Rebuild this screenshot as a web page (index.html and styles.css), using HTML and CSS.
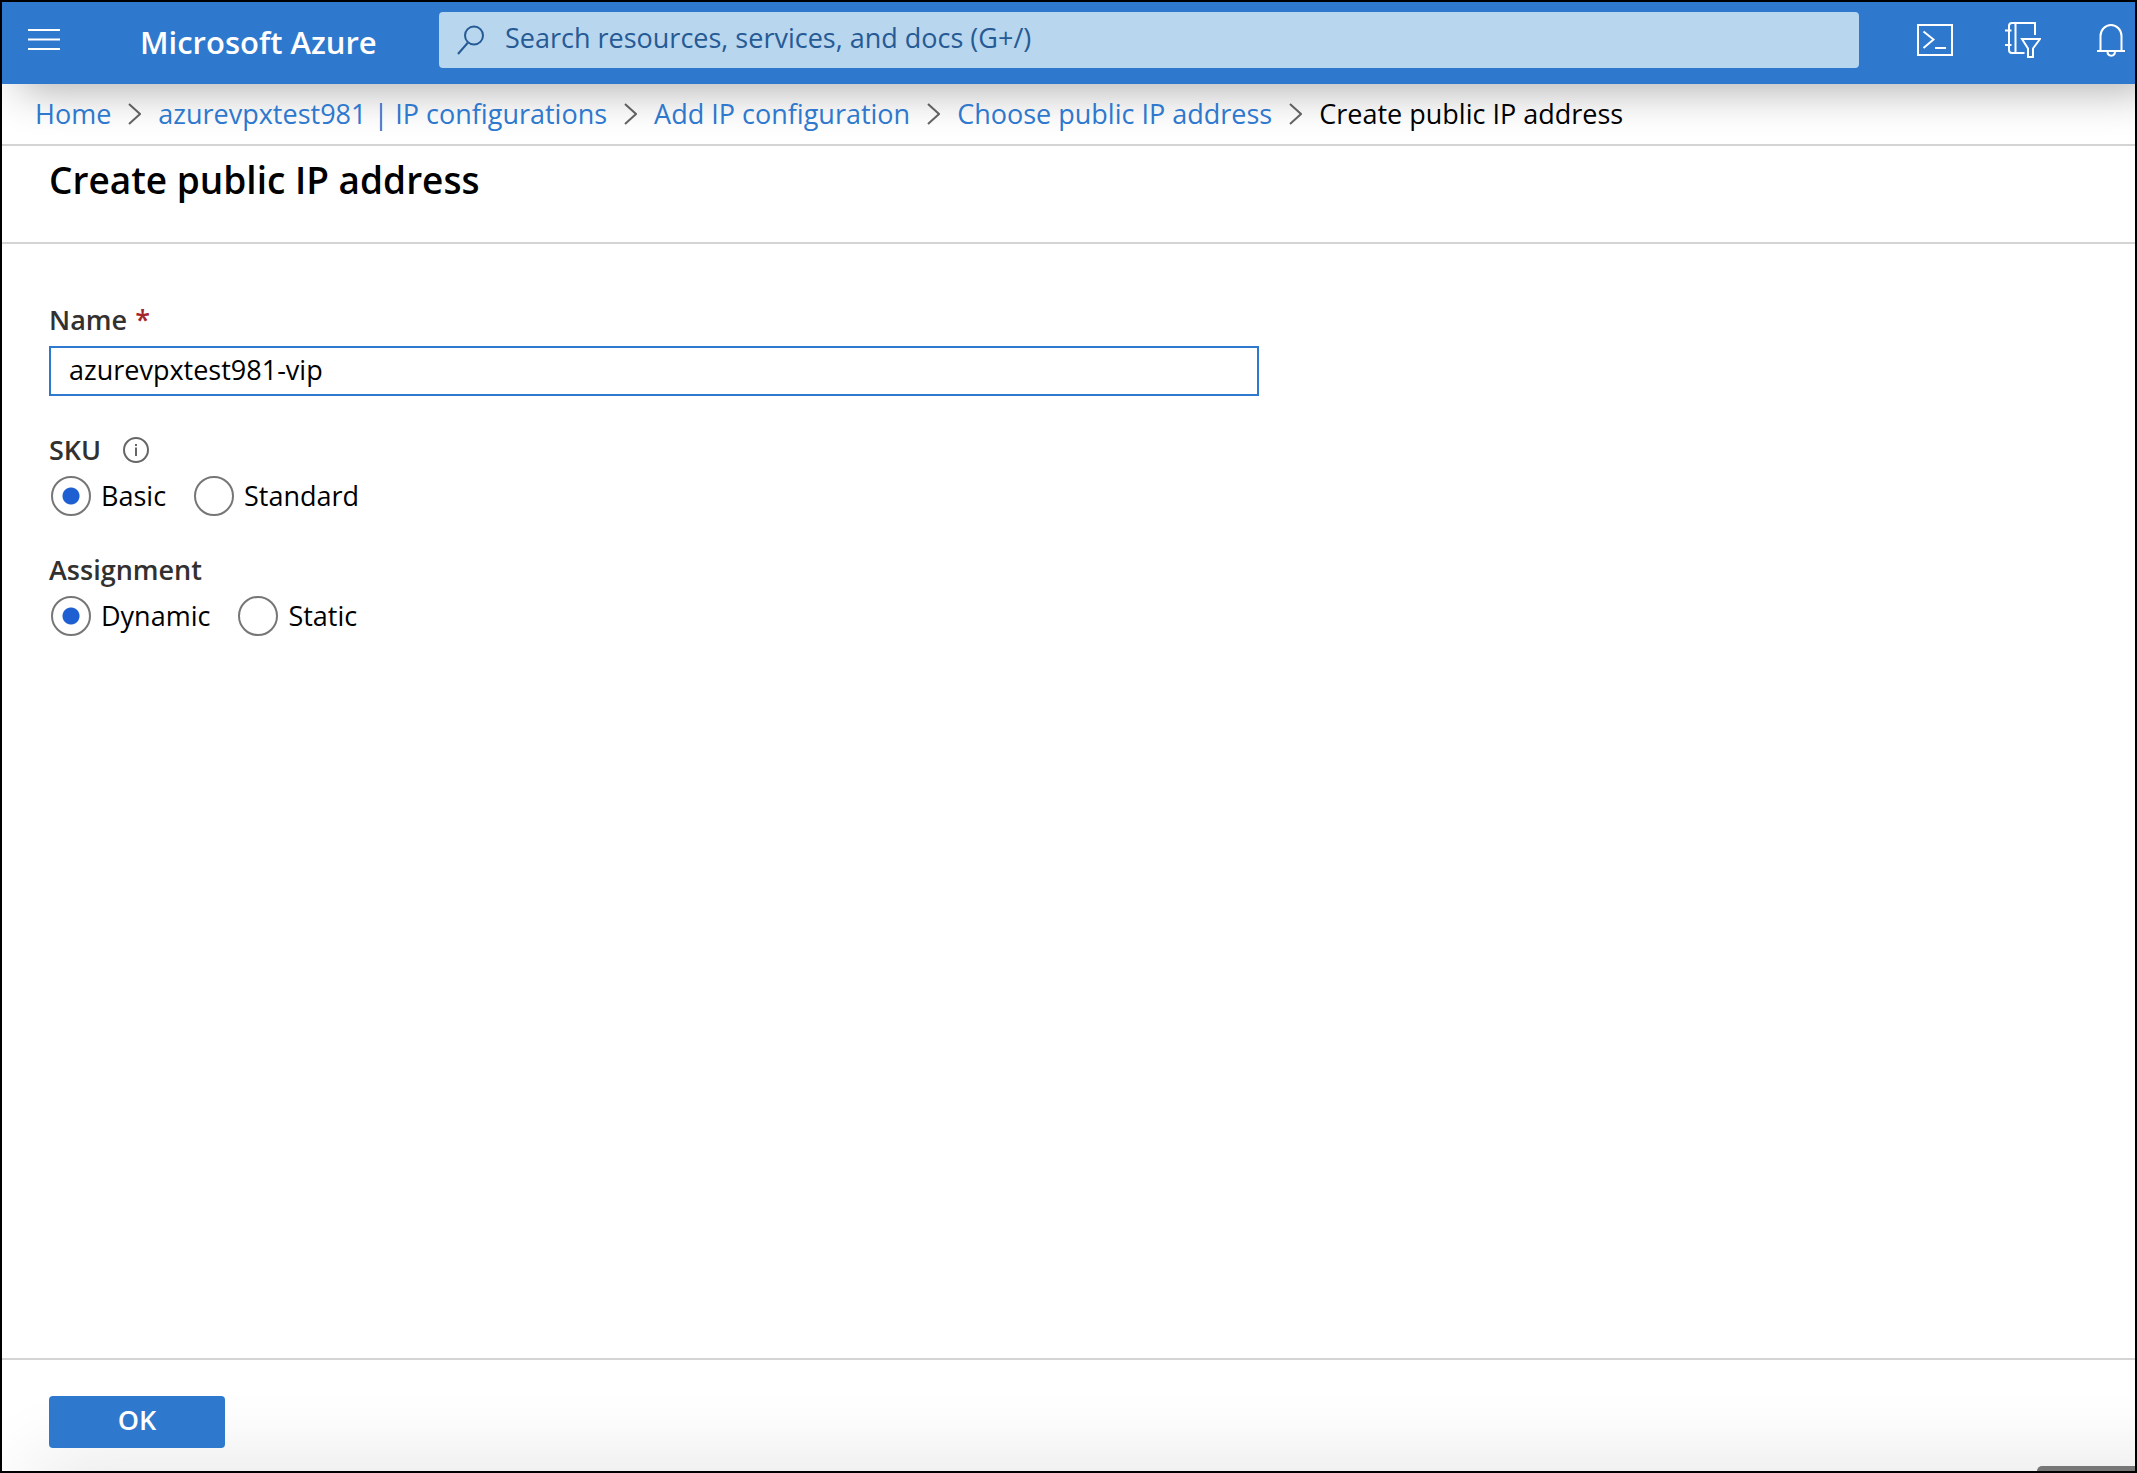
FILE: index.html
```html
<!DOCTYPE html>
<html lang="en">
<head>
<meta charset="utf-8">
<meta name="viewport" content="width=device-width, initial-scale=1">
<title>Create public IP address - Microsoft Azure</title>
<link rel="stylesheet" href="styles.css">
</head>
<body>
<header class="topbar">
  <button class="icon-button menu-button" type="button" aria-label="Show portal menu">
    <svg width="32" height="22" viewBox="0 0 32 22" fill="none" stroke="currentColor" stroke-width="2"><path d="M0 1h32M0 10.500h32M0 20h32"/></svg>
  </button>
  <a class="brand" href="#">Microsoft Azure</a>
  <form class="search" role="search">
    <svg class="search-icon" width="28" height="30" viewBox="0 0 28 30" fill="none" stroke="currentColor" stroke-width="2"><circle cx="17" cy="10.500" r="9"/><path d="M11 17.500L1 29"/></svg>
    <input class="search-input" type="search" aria-label="Search" placeholder="Search resources, services, and docs (G+/)">
  </form>
  <nav class="tools" aria-label="Portal tools">
    <button class="icon-button" type="button" aria-label="Cloud Shell">
      <svg width="36" height="36" viewBox="0 0 36 36" fill="none" stroke="currentColor" stroke-width="2"><path d="M1 3h34v30H1zM6.500 9.500l10 8-10 8.500M18 26h11"/></svg>
    </button>
    <button class="icon-button" type="button" aria-label="Directories and subscriptions">
      <svg width="36" height="36" viewBox="0 0 36 36" fill="none" stroke="currentColor" stroke-width="2"><path d="M30 13V1H7Q4 1 4 4v24q0 3 3 3h12.500M10.500 1v30M0 8.500h6.500M0 23h6.500"/><path d="M17 17h18l-7 9.500V35h-5v-8.500z"/></svg>
    </button>
    <button class="icon-button" type="button" aria-label="Notifications">
      <svg width="32" height="36" viewBox="-4 0 32 36" fill="none" stroke="currentColor" stroke-width="2"><path d="M0 29h28M3.500 29V14a10.500 11 0 0 1 21 0v15M10.500 29.500c0 5.500 7.500 5.500 7.500 0"/></svg>
    </button>
  </nav>
</header>
<nav class="breadcrumb" aria-label="Breadcrumb">
  <a href="#">Home</a>
  <svg class="chevron" width="13" height="22" viewBox="0 0 13 22"><path d="M1 1l11 10L1 21"/></svg>
  <a href="#">azurevpxtest981 | IP configurations</a>
  <svg class="chevron" width="13" height="22" viewBox="0 0 13 22"><path d="M1 1l11 10L1 21"/></svg>
  <a href="#">Add IP configuration</a>
  <svg class="chevron" width="13" height="22" viewBox="0 0 13 22"><path d="M1 1l11 10L1 21"/></svg>
  <a href="#">Choose public IP address</a>
  <svg class="chevron" width="13" height="22" viewBox="0 0 13 22"><path d="M1 1l11 10L1 21"/></svg>
  <span aria-current="page">Create public IP address</span>
</nav>
<div class="blade-header"><h1>Create public IP address</h1></div>
<main class="blade-body">
  <form class="form" id="create-ip">
    <div class="field">
      <label class="label" for="name">Name <span class="required">*</span></label>
      <input class="text-input" id="name" type="text" value="azurevpxtest981-vip" required>
    </div>
    <fieldset class="field">
      <legend class="label">SKU
        <svg class="info" width="26" height="26" viewBox="0 0 26 26" fill="none" stroke="currentColor"><circle cx="13" cy="13" r="12" stroke-width="2"/><path d="M13 10.500v8.500M13 7v2" stroke-width="2"/></svg>
      </legend>
      <div class="options">
        <label class="option"><input type="radio" name="sku" checked>Basic</label>
        <label class="option"><input type="radio" name="sku">Standard</label>
      </div>
    </fieldset>
    <fieldset class="field">
      <legend class="label">Assignment</legend>
      <div class="options">
        <label class="option"><input type="radio" name="assignment" checked>Dynamic</label>
        <label class="option"><input type="radio" name="assignment">Static</label>
      </div>
    </fieldset>
  </form>
</main>
<footer class="blade-footer">
  <button class="primary" type="submit" form="create-ip">OK</button>
</footer>
</body>
</html>
```
FILE: styles.css
```css
* {
  box-sizing: border-box;
}

body {
  display: flex;
  flex-direction: column;
  min-height: 100vh;
  margin: 0;
  overflow-x: hidden;
  border: 2px solid #000;
  background: #fff;
  color: #000;
  font: 27px/36px "Open Sans", "Noto Sans", sans-serif;
}

button,
input {
  font: inherit;
}

a {
  color: #2e78ce;
  text-decoration: none;
}

/* Top bar */
.topbar {
  position: relative;
  display: flex;
  align-items: center;
  height: 82px;
  padding: 0 10px 6px 26px;
  background: #2e78ce;
  color: #fff;
  box-shadow: 18px 6px 44px rgba(0, 0, 0, 0.32);
}

.icon-button {
  display: flex;
  padding: 0;
  border: 0;
  background: none;
  color: inherit;
}

.menu-button {
  width: 112px;
}

.brand {
  width: 299px;
  padding-top: 4px;
  color: #fff;
  font-size: 31px;
  font-weight: 600;
  white-space: nowrap;
}

.search {
  display: flex;
  flex: 1;
  align-items: center;
  gap: 20px;
  height: 56px;
  padding: 0 18px;
  border-radius: 4px;
  background: #b8d6ee;
  color: #265a94;
}

.search-input {
  flex: 1;
  min-width: 0;
  height: 56px;
  padding: 0 0 5px;
  border: 0;
  outline: 0;
  background: none;
  color: inherit;
}

.search-input::placeholder {
  color: inherit;
  opacity: 1;
}

.tools {
  display: flex;
  gap: 52px;
  margin-left: 58px;
}

/* Breadcrumb */
.breadcrumb {
  display: flex;
  align-items: center;
  gap: 17px;
  height: 62px;
  padding: 0 33px;
  border-bottom: 2px solid #d4d4d4;
  white-space: nowrap;
}

.breadcrumb a,
.breadcrumb span {
  position: relative;
}

.chevron {
  flex: none;
  fill: none;
  stroke: #666;
  stroke-width: 2;
}

/* Blade */
.blade-header {
  height: 98px;
  padding: 10px 47px;
  border-bottom: 2px solid #d4d4d4;
}

h1 {
  margin: 0;
  font-size: 37px;
  line-height: 48px;
  font-weight: 600;
}

.blade-body {
  flex: 1;
  padding: 58px 47px;
}

.form {
  display: grid;
  gap: 36px;
  max-width: 1210px;
}

.field {
  min-width: 0;
  margin: 0;
  padding: 0;
  border: 0;
}

.label {
  display: flex;
  align-items: center;
  gap: 8px;
  margin-bottom: 8px;
  padding: 0;
  color: #323130;
  font-weight: 600;
}

.required {
  color: #a4262c;
}

.text-input {
  display: block;
  width: 100%;
  height: 50px;
  padding: 0 18px 4px;
  border: 2px solid #2e78ce;
  outline: 0;
  background: #fff;
}

.info {
  margin-left: 14px;
  color: #666;
}

.options {
  display: flex;
  gap: 28px;
  padding-left: 2px;
}

.option {
  display: flex;
  align-items: center;
  gap: 10px;
}

.option input {
  width: 40px;
  height: 40px;
  margin: 0;
  border: 2px solid #767676;
  border-radius: 50%;
  appearance: none;
}

.option input:checked {
  background: radial-gradient(circle, #1e5fd2 8px, transparent 9px);
}

/* Footer */
.blade-footer {
  position: relative;
  height: 113px;
  padding: 36px 47px 0;
  overflow: hidden;
  border-top: 2px solid #d4d4d4;
}

.blade-footer::before {
  position: absolute;
  top: 100%;
  right: -80px;
  left: 30px;
  height: 40px;
  box-shadow: 0 0 80px rgba(0, 0, 0, 0.16);
  content: "";
}

.blade-footer::after {
  position: absolute;
  right: 0;
  bottom: 0;
  width: 98px;
  height: 5px;
  border-top-left-radius: 5px;
  background: #777;
  content: "";
}

.primary {
  position: relative;
  width: 176px;
  height: 52px;
  padding: 0 0 4px;
  border: 0;
  border-radius: 4px;
  background: #2e78ce;
  color: #fff;
  font-weight: 600;
}
```
